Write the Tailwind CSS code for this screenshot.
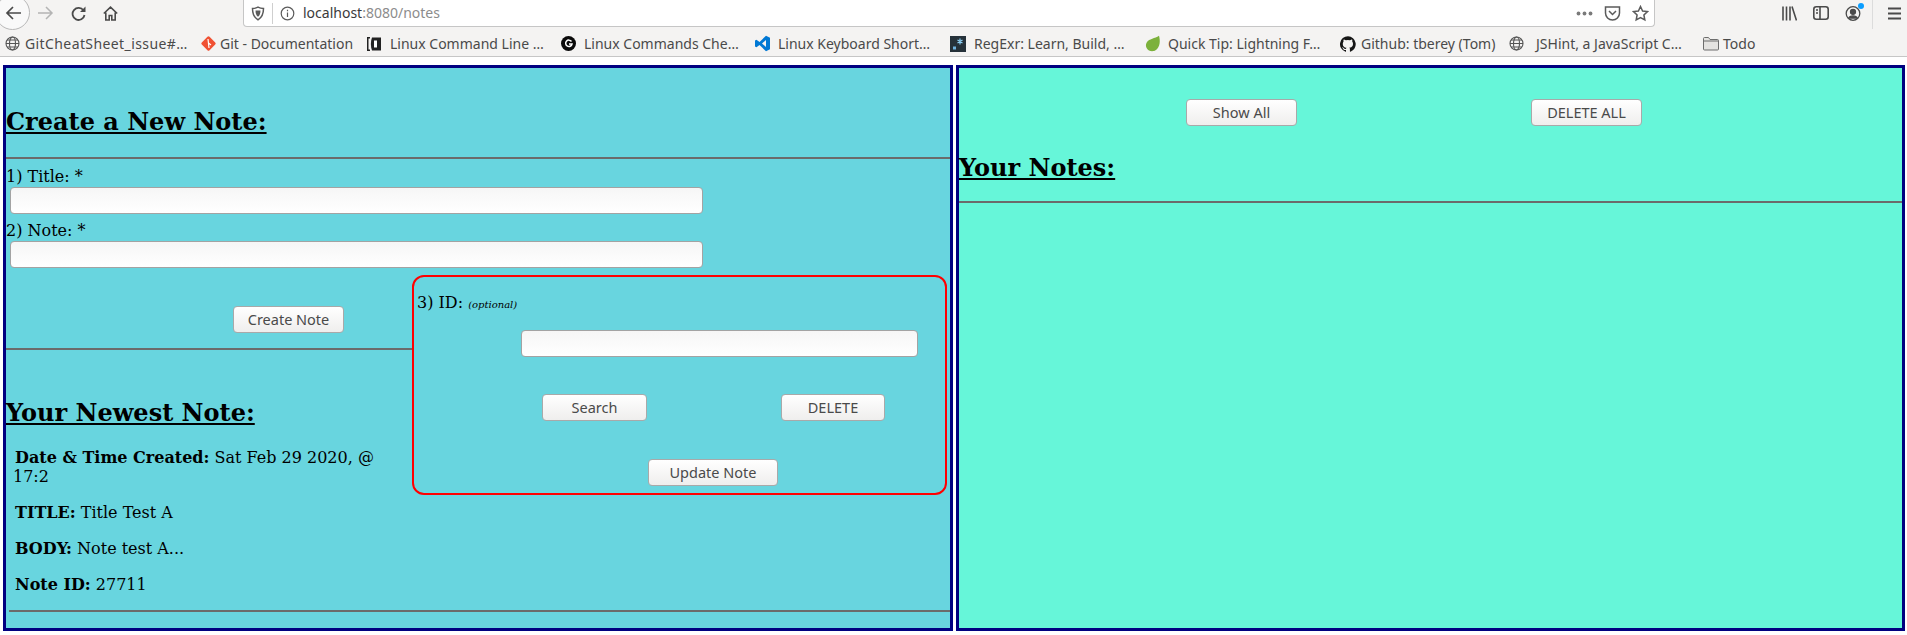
<!DOCTYPE html>
<html lang="en">
  <head>
    <meta charset="UTF-8" />
    <title>Notes</title>
    <script src="https://cdn.jsdelivr.net/npm/@tailwindcss/browser@4"></script>
  </head>
  <body class="bg-white h-[635px] overflow-hidden font-['DejaVu_Serif',serif] text-black text-[16px]">

    <!-- browser toolbar -->
    <div class="relative z-10 h-[28px] bg-[#f4f3f2] flex items-start font-['Noto_Sans',sans-serif] text-[#4a4a4a]">
      <div class="absolute -left-[5px] -top-[5px] w-[35px] h-[35px] rounded-full bg-[#f9f9f9] border border-[#b8b8b8]"></div>
      <div class="relative w-[243px] h-[27px] shrink-0">
        <svg class="absolute left-[5px] top-[6px]" width="16" height="14" viewBox="0 0 16 14" fill="none" stroke="#4a4a4a" stroke-width="1.700"><path d="M16 7H2M8 1L2 7l6 6"/></svg>
        <svg class="absolute left-[38px] top-[6px]" width="16" height="14" viewBox="0 0 16 14" fill="none" stroke="#b4b4b4" stroke-width="1.500"><path d="M0 7h14M8 1l6 6-6 6"/></svg>
        <svg class="absolute left-[71px] top-[6px]" width="15" height="15" viewBox="0 0 15 15" fill="none" stroke="#4a4a4a" stroke-width="1.800"><path d="M12.500 4.500A6 6 0 1 0 13.500 9"/><path d="M14.500 .5v5.500H9z" fill="#4a4a4a" stroke="none"/></svg>
        <svg class="absolute left-[103px] top-[6px]" width="15" height="15" viewBox="0 0 15 15" fill="none" stroke="#4a4a4a" stroke-width="1.600"><path d="M.8 7.500L7.500 1.200l6.700 6.300M2.800 6.500v7.500h3.400V9.500h2.600V14h3.400V6.500"/></svg>
      </div>
      <div class="w-[1412px] h-[27px] shrink-0 bg-white rounded-b-[4px] border-b border-x border-[#c6c6c6] flex items-center relative">
        <svg class="ml-[7px] shrink-0" width="14" height="15" viewBox="0 0 14 15" fill="none" stroke="#5b5b5b" stroke-width="1.500"><path d="M1.500 2.500C4 2.500 5.500 2 7 1.200 8.500 2 10 2.500 12.500 2.500 12.500 8 11 11.500 7 13.800 3 11.500 1.500 8 1.500 2.500z"/><path d="M4.500 4.500h5c0 3-.8 5-2.500 6.200-1.700-1.200-2.500-3.200-2.500-6.200z" fill="#5b5b5b" stroke="none"/></svg>
        <div class="ml-[7px] w-px h-[21px] bg-[#cfcfcf]"></div>
        <svg class="ml-[7px] shrink-0" width="15" height="15" viewBox="0 0 15 15" fill="none" stroke="#5b5b5b" stroke-width="1.200"><circle cx="7.500" cy="7.500" r="6.300"/><path d="M7.500 6.500v4.500M7.500 3.800v1.500"/></svg>
        <span class="ml-[8px] text-[14px] leading-none text-[#3a3a3a]">localhost<span class="text-[#8c8c8c]">:8080/notes</span></span>
        <div class="ml-auto flex items-center gap-[11px] pr-[5px]">
          <svg width="17" height="5" viewBox="0 0 17 5" fill="#7a7a7a"><circle cx="2.500" cy="2.500" r="1.900"/><circle cx="8.500" cy="2.500" r="1.900"/><circle cx="14.500" cy="2.500" r="1.900"/></svg>
          <svg width="17" height="16" viewBox="0 0 17 16" fill="none" stroke="#5b5b5b" stroke-width="1.500"><path d="M1.500 2h14v6a6.500 6.500 0 0 1-14 0z"/><path d="M5 6l3.500 3.500L12 6"/></svg>
          <svg width="17" height="17" viewBox="0 0 17 17" fill="none" stroke="#5b5b5b" stroke-width="1.500"><path d="M8.500 1.500l2.100 4.500 4.900.6-3.600 3.400.9 4.900-4.300-2.400-4.300 2.400.9-4.900L1.500 6.600l4.900-.6z"/></svg>
        </div>
      </div>
      <div class="flex-1 h-[27px] relative">
        <svg class="absolute left-[127px] top-[6px]" width="15" height="15" viewBox="0 0 15 15" fill="none" stroke="#4a4a4a" stroke-width="1.600"><path d="M1 .5v14M4.500 .5v14M8 .5v14M10 .5l4.500 14"/></svg>
        <svg class="absolute left-[158px] top-[6px]" width="16" height="14" viewBox="0 0 16 14" fill="none" stroke="#4a4a4a" stroke-width="1.600"><rect x=".8" y=".8" width="14.400" height="12.400" rx="2.500"/><path d="M7 .8v12.400M3 4h2M3 7h2"/></svg>
        <svg class="absolute left-[190px] top-[5px]" width="16" height="16" viewBox="0 0 16 16" fill="none" stroke="#4a4a4a" stroke-width="1.300"><circle cx="8" cy="8.500" r="6.800"/><circle cx="8" cy="6.800" r="2.500" fill="#4a4a4a"/><path d="M3.800 13c1-2.800 7.400-2.800 8.400 0z" fill="#4a4a4a"/></svg>
        <div class="absolute left-[203px] top-[3px] w-[6px] h-[6px] rounded-full bg-[#0a9dff]"></div>
        <div class="absolute left-[217px] top-0 w-px h-[29px] bg-[#dcdcdc]"></div>
        <svg class="absolute left-[233px] top-[7px]" width="13" height="13" viewBox="0 0 13 13" fill="none" stroke="#4a4a4a" stroke-width="2"><path d="M0 1.500h13M0 6.500h13M0 11.500h13"/></svg>
      </div>
    </div>

    <!-- bookmarks bar -->
    <div class="h-[29px] bg-[#f4f3f2] border-b border-[#c6c6c6] flex items-center pl-[5px] pt-[3px] font-['Noto_Sans',sans-serif] text-[14px] leading-none text-[#4a4a4a] whitespace-nowrap">
      <div class="w-[195px] flex items-center gap-[5px]">
        <svg width="15" height="15" viewBox="0 0 15 15" fill="none" stroke="#555" stroke-width="1.100"><circle cx="7.500" cy="7.500" r="6.500"/><ellipse cx="7.500" cy="7.500" rx="3" ry="6.500"/><path d="M1 7.500h13M2 4h11M2 11h11"/></svg>
        <span class="tracking-[0.4px]">GitCheatSheet_issue#…</span>
      </div>
      <div class="w-[166px] flex items-center gap-[3px]">
        <svg width="17" height="17" viewBox="0 0 17 17"><rect x="3" y="3" width="11" height="11" transform="rotate(45 8.500 8.500)" rx="1.500" fill="#f05133"/><path d="M8 4l1 9M8.500 8l2.500 2" stroke="#fff" stroke-width="1.200" fill="none"/></svg>
        <span>Git - Documentation</span>
      </div>
      <div class="w-[195px] flex items-center gap-[8px]">
        <svg width="16" height="16" viewBox="0 0 16 16"><path d="M1 1h3v1.500H2.500v11H4V15H1z" fill="#222"/><path d="M6 1.500h9v13H6C4.500 11 4.500 5 6 1.500z" fill="#222"/><path d="M8 4.500h3v7H8z" fill="#fff"/></svg>
        <span>Linux Command Line …</span>
      </div>
      <div class="w-[193px] flex items-center gap-[8px]">
        <svg width="15" height="15" viewBox="0 0 15 15"><circle cx="7.500" cy="7.500" r="7.500" fill="#0a0a0a"/><path d="M10.500 5.500a3.200 3.200 0 1 0 .5 2.500H8" fill="none" stroke="#fff" stroke-width="1.500"/></svg>
        <span>Linux Commands Che…</span>
      </div>
      <div class="w-[196px] flex items-center gap-[7px]">
        <svg width="17" height="17" viewBox="0 0 17 17"><path d="M12 .800l4 2v11.400l-4 2L5.500 10 2.500 12.300 1 11.500V5.500l1.500-.8L5.500 7z" fill="#0078d4"/><path d="M12 5L8 8.500l4 3.500z" fill="#f4f3f2"/></svg>
        <span>Linux Keyboard Short…</span>
      </div>
      <div class="w-[195px] flex items-center gap-[8px]">
        <svg width="16" height="16" viewBox="0 0 16 16"><rect width="16" height="16" fill="#26323a"/><rect x="3" y="10.500" width="3" height="3" fill="#6fb3e0"/><path d="M10 2.500v6M7.500 4l5 3M12.500 4l-5 3" stroke="#8ed0f5" stroke-width="1.200"/></svg>
        <span>RegExr: Learn, Build, …</span>
      </div>
      <div class="w-[195px] flex items-center gap-[7px]">
        <svg width="16" height="17" viewBox="0 0 16 17"><path d="M14 .800C15.500 6 15 12 11 15c-2 1.500-5 1.500-7 .5C1 13.500 0 10 2 7c2-3 8-3.500 12-6.200z" fill="#7cb13b"/></svg>
        <span>Quick Tip: Lightning F…</span>
      </div>
      <div class="w-[169px] flex items-center gap-[5px]">
        <svg width="16" height="16" viewBox="0 0 16 16" fill="#161616"><path d="M8 .2a8 8 0 0 0-2.500 15.600c.4.100.5-.2.500-.4v-1.400c-2.200.5-2.700-1-2.700-1-.4-.9-.9-1.200-.9-1.200-.7-.5.100-.5.100-.5.800.1 1.200.8 1.200.8.700 1.200 1.900.9 2.300.7.100-.5.300-.9.500-1.100-1.800-.2-3.700-.9-3.700-4 0-.9.300-1.600.8-2.100-.1-.2-.4-1 .1-2.100 0 0 .7-.2 2.200.8a7.500 7.500 0 0 1 4 0c1.500-1 2.200-.8 2.200-.8.400 1.100.2 1.900.1 2.100.5.600.8 1.300.8 2.100 0 3.100-1.900 3.700-3.700 3.900.3.300.6.800.6 1.500v2.200c0 .2.100.5.600.4A8 8 0 0 0 8 .2z"/></svg>
        <span>Github: tberey (Tom)</span>
      </div>
      <div class="w-[194px] flex items-center gap-[12px]">
        <svg width="15" height="15" viewBox="0 0 15 15" fill="none" stroke="#555" stroke-width="1.100"><circle cx="7.500" cy="7.500" r="6.500"/><ellipse cx="7.500" cy="7.500" rx="3" ry="6.500"/><path d="M1 7.500h13M2 4h11M2 11h11"/></svg>
        <span>JSHint, a JavaScript C…</span>
      </div>
      <div class="flex items-center gap-[4px]">
        <svg width="16" height="15" viewBox="0 0 16 15" fill="#e4e3e1" stroke="#6d6d6d"><path d="M.5 13V2.500a1 1 0 0 1 1-1h4l1.500 2h7.500a1 1 0 0 1 1 1V13a1 1 0 0 1-1 1h-13a1 1 0 0 1-1-1z"/><path d="M.5 5h15" fill="none"/></svg>
        <span>Todo</span>
      </div>
    </div>

    <!-- page -->
    <div class="flex gap-[3px] pl-[3px] pt-[8px]">

      <div class="w-[950px] h-[566px] shrink-0 border-[3px] border-[#000080] bg-[#68d5df] flex flex-col">
        <h2 class="pt-[40px] text-[24px] leading-[28px] font-bold underline">Create a New Note:</h2>
        <div class="mt-[21px] h-[2px] bg-[#6b6b6b]"></div>
        <label class="mt-[8px] leading-[19px] block">1) Title: *</label>
        <input type="text" class="ml-[4px] mt-[1px] w-[693px] h-[27px] rounded-[4px] border border-[#a3a3a3] bg-linear-to-b from-[#f6f6f6] to-white" />
        <label class="mt-[7px] leading-[19px] block">2) Note: *</label>
        <input type="text" class="ml-[4px] mt-[1px] w-[693px] h-[27px] rounded-[4px] border border-[#a3a3a3] bg-linear-to-b from-[#f6f6f6] to-white" />

        <div class="mt-[7px] flex items-start">
          <div class="w-[406px] shrink-0">
            <div class="h-[73px] pt-[31px] pl-[227px]">
              <button class="w-[111px] h-[27px] rounded-[4px] border border-[#a9a9a9] bg-linear-to-b from-white to-[#efeeed] text-[#4a4a4a] font-['Noto_Sans',sans-serif] text-[14.500px]">Create Note</button>
            </div>
            <div class="h-[2px] bg-[#6b6b6b]"></div>
            <h2 class="mt-[49px] text-[24px] leading-[28px] font-bold underline">Your Newest Note:</h2>
            <div class="pl-[7px] pr-[8px] mt-[21px] leading-[19px]">
              <p><strong class="ml-[2px]">Date &amp; Time Created:</strong> Sat Feb 29 2020, @ 17:2</p>
              <p class="mt-[17px]"><strong class="ml-[2px]">TITLE:</strong> Title Test A</p>
              <p class="mt-[17px]"><strong class="ml-[2px]">BODY:</strong> Note test A...</p>
              <p class="mt-[17px]"><strong class="ml-[2px]">Note ID:</strong> 27711</p>
            </div>
          </div>
          <div class="w-[535px] h-[220px] shrink-0 border-2 border-[#ff0000] rounded-[12px] flex flex-col">
            <div class="pt-[16px] pl-[3px] leading-[19px]">3) ID: <em class="text-[10px]">(optional)</em></div>
            <input type="text" class="ml-[107px] mt-[16px] w-[397px] h-[27px] rounded-[4px] border border-[#a3a3a3] bg-linear-to-b from-[#f6f6f6] to-white" />
            <div class="mt-[37px] flex pl-[128px] gap-[134px]">
              <button class="w-[105px] h-[27px] rounded-[4px] border border-[#a9a9a9] bg-linear-to-b from-white to-[#efeeed] text-[#4a4a4a] font-['Noto_Sans',sans-serif] text-[14.500px]">Search</button>
              <button class="w-[104px] h-[27px] rounded-[4px] border border-[#a9a9a9] bg-linear-to-b from-white to-[#efeeed] text-[#4a4a4a] font-['Noto_Sans',sans-serif] text-[14.500px]">DELETE</button>
            </div>
            <div class="mt-[38px] pl-[234px]">
              <button class="w-[130px] h-[27px] rounded-[4px] border border-[#a9a9a9] bg-linear-to-b from-white to-[#efeeed] text-[#4a4a4a] font-['Noto_Sans',sans-serif] text-[14.500px]">Update Note</button>
            </div>
          </div>
        </div>
        <div class="mt-auto mb-[16px] ml-[3px] h-[2px] bg-[#6b6b6b]"></div>
      </div>

      <div class="w-[949px] h-[566px] shrink-0 border-[3px] border-[#000080] bg-[#66f6d9] flex flex-col">
        <div class="pt-[31px] flex pl-[227px] gap-[234px]">
          <button class="w-[111px] h-[27px] rounded-[4px] border border-[#a9a9a9] bg-linear-to-b from-white to-[#efeeed] text-[#4a4a4a] font-['Noto_Sans',sans-serif] text-[14.500px]">Show All</button>
          <button class="w-[111px] h-[27px] rounded-[4px] border border-[#a9a9a9] bg-linear-to-b from-white to-[#efeeed] text-[#4a4a4a] font-['Noto_Sans',sans-serif] text-[14.500px]">DELETE ALL</button>
        </div>
        <h2 class="mt-[28px] text-[24px] leading-[28px] font-bold underline">Your Notes:</h2>
        <div class="mt-[19px] h-[2px] bg-[#6b6b6b]"></div>
      </div>
    </div>

  </body>
</html>
